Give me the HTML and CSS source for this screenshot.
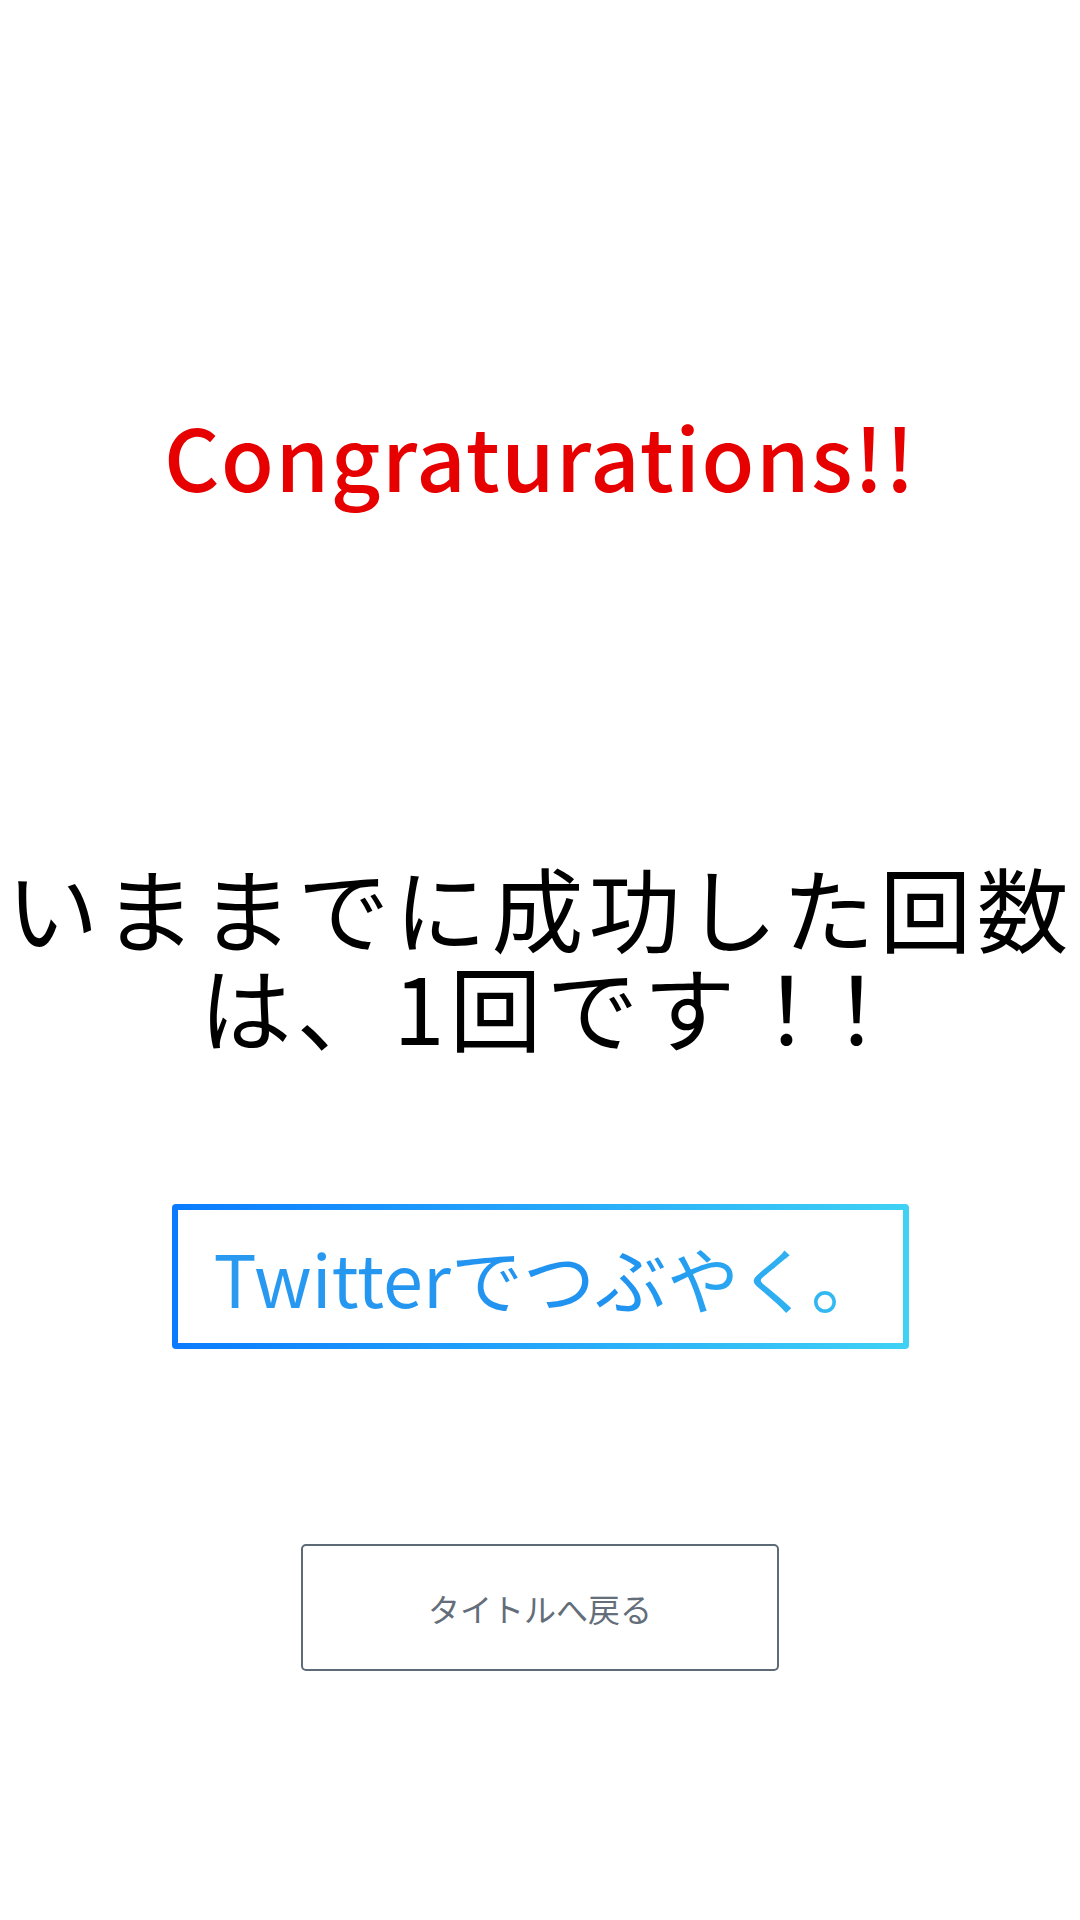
FILE: index.html
```html
<!DOCTYPE html>
<html lang="ja">
<head>
<meta charset="utf-8">
<link rel="stylesheet" href="styles.css">
</head>
<body>
<main class="page">
  <h1 class="congrats">Congraturations!!</h1>
  <p class="count"><span class="line">いままでに成功した回数</span><span class="line">は、1回です<span class="bang">！！</span></span></p>
  <a class="tweet" href="#"><span class="tweet-text">Twitterでつぶやく。</span></a>
  <a class="back" href="#">タイトルへ戻る</a>
</main>
</body>
</html>
```
FILE: styles.css
```css
html, body {
  margin: 0;
  padding: 0;
  background: #ffffff;
}
.page {
  width: 1080px;
  height: 1920px;
  display: flex;
  flex-direction: column;
  align-items: center;
  font-family: "Noto Sans CJK JP", "Noto Sans", sans-serif;
}
.congrats {
  margin: 400px 0 0 0;
  font-size: 86px;
  line-height: 110px;
  font-weight: 500;
  color: #e60000;
  letter-spacing: 1.5px;
}
.count {
  margin: 346px 0 0 0;
  width: 1080px;
  display: flex;
  flex-direction: column;
  align-items: center;
  font-size: 92px;
  font-weight: 400;
  color: #000;
}
.line {
  display: block;
  height: 99px;
  line-height: 99px;
  letter-spacing: 5px;
  white-space: nowrap;
}
.bang {
  letter-spacing: -22px;
}
.tweet {
  margin-top: 150px;
  width: 737px;
  height: 145px;
  box-sizing: border-box;
  border: 6px solid transparent;
  border-radius: 4px;
  background:
    linear-gradient(#fff, #fff) padding-box,
    linear-gradient(90deg, #0a7bff, #3fd2f4) border-box;
  display: flex;
  align-items: center;
  padding-left: 36px;
  text-decoration: none;
}
.tweet-text {
  font-size: 72px;
  line-height: 1;
  font-weight: 400;
  letter-spacing: 0;
  background: linear-gradient(90deg, #2a9af0, #1f92f0 60%, #38c2f2);
  -webkit-background-clip: text;
  background-clip: text;
  color: transparent;
}
.back {
  margin-top: 195px;
  width: 478px;
  height: 127px;
  box-sizing: border-box;
  border: 2px solid #5f6a77;
  border-radius: 5px;
  display: flex;
  align-items: center;
  justify-content: center;
  color: #646e7a;
  font-size: 32px;
  text-decoration: none;
}
```
